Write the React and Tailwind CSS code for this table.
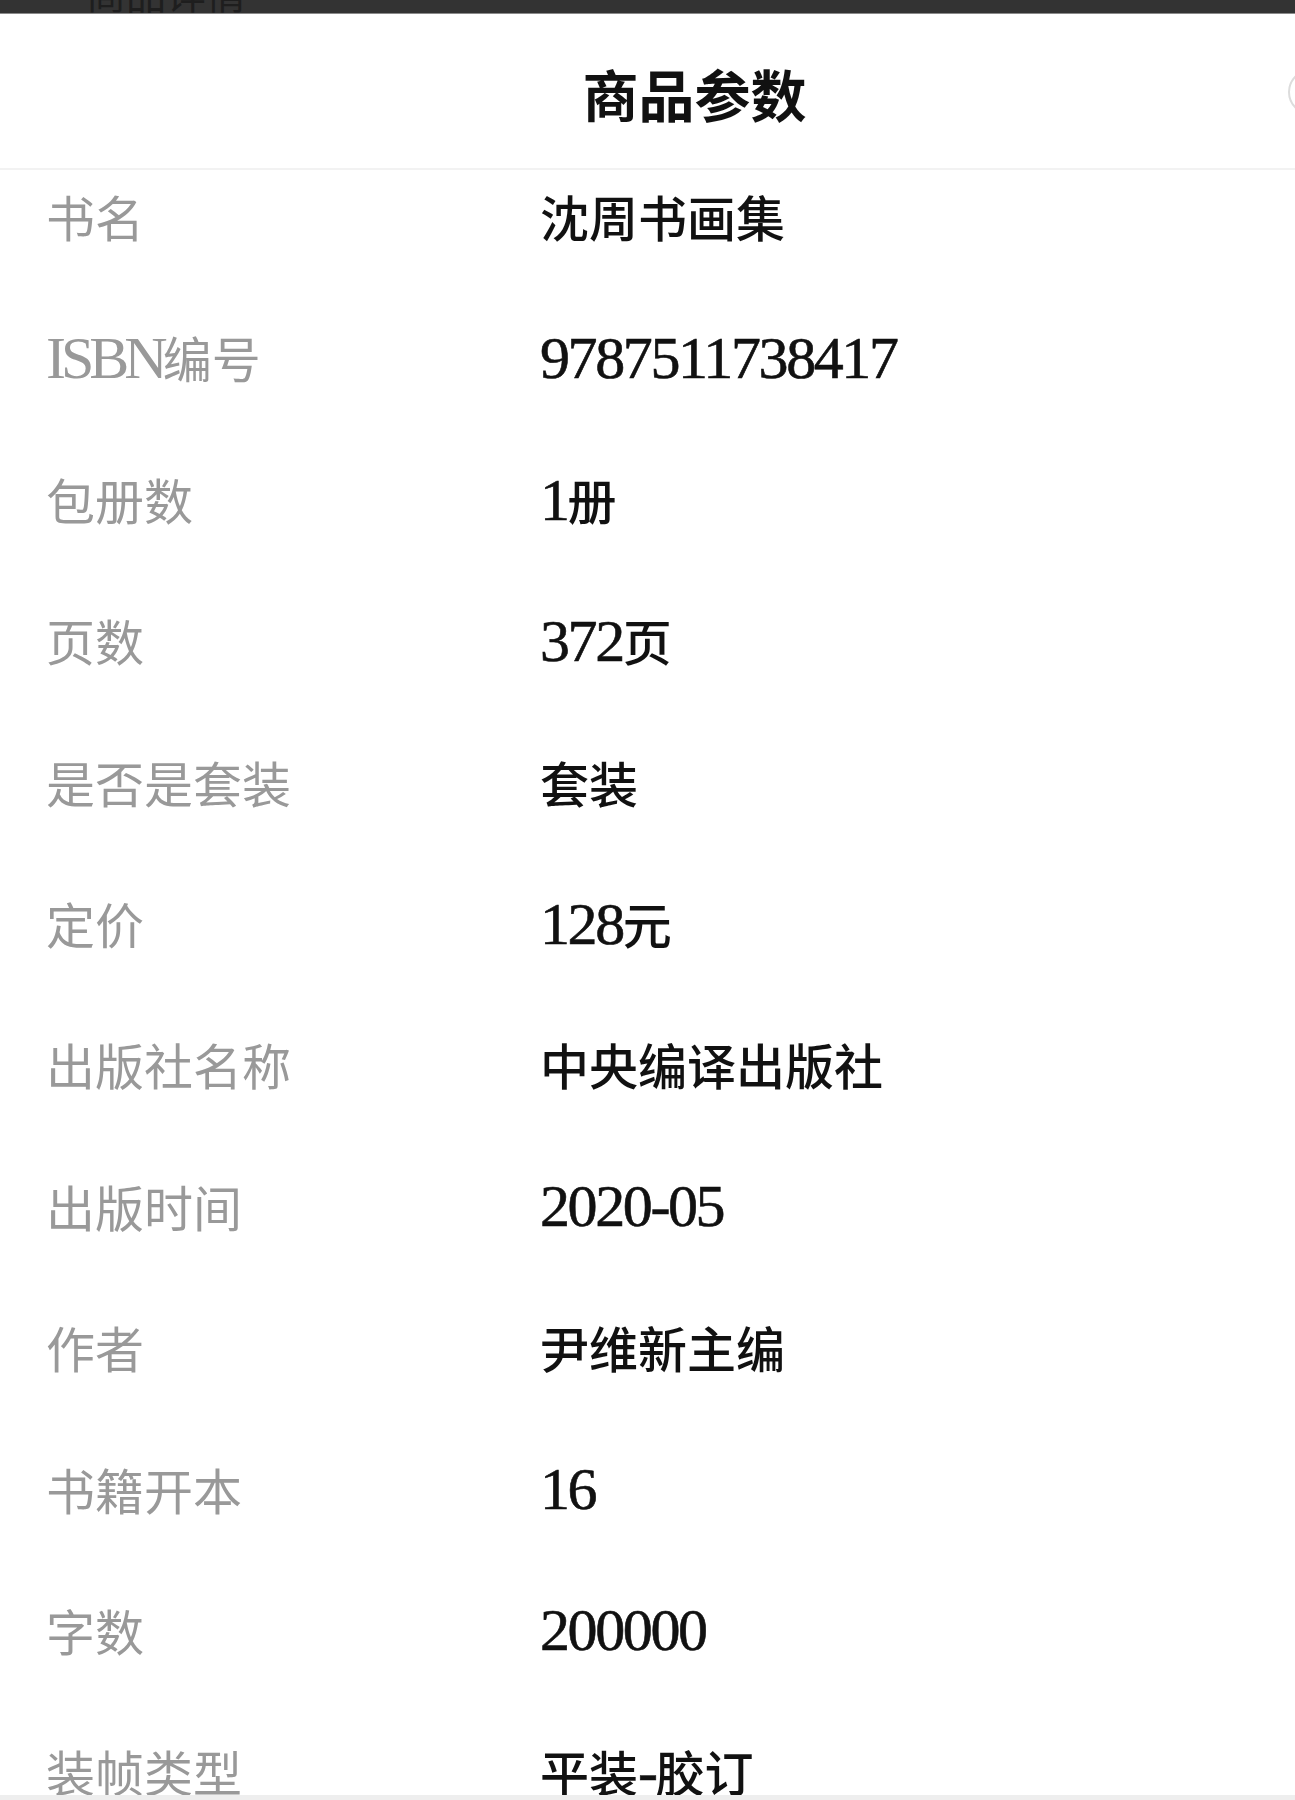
import React from "react";

const rows = [
  ["书名", "沈周书画集"],
  ["ISBN编号", "9787511738417"],
  ["包册数", "1册"],
  ["页数", "372页"],
  ["是否是套装", "套装"],
  ["定价", "128元"],
  ["出版社名称", "中央编译出版社"],
  ["出版时间", "2020-05"],
  ["作者", "尹维新主编"],
  ["书籍开本", "16"],
  ["字数", "200000"],
  ["装帧类型", "平装-胶订"],
];

function Runs({ text, label }) {
  const parts = text.match(/[\x00-\x7f]+|[^\x00-\x7f]+/g) || [];
  return parts.map((p, i) =>
    /^[\x00-\x7f]+$/.test(p) ? (
      <span
        key={i}
        className={
          label
            ? "font-['Liberation_Serif',serif] text-[60px] tracking-[-5px]"
            : "font-['Liberation_Serif',serif] text-[60px] tracking-[-2.4px] [-webkit-text-stroke:0.6px_#111111]"
        }
      >
        {p}
      </span>
    ) : (
      <span
        key={i}
        className={
          label
            ? "font-['Noto_Sans_CJK_SC',sans-serif] text-[49px]"
            : "font-['Noto_Sans_CJK_SC',sans-serif] text-[49px] font-medium"
        }
      >
        {p}
      </span>
    )
  );
}

export default function App() {
  return (
    <div className="relative w-[1295px] h-[1800px] overflow-hidden bg-white font-['Noto_Sans_CJK_SC',sans-serif]">
      <div className="h-[14px] bg-[#333333] border-b border-[#8a8a8a] overflow-hidden">
        <div className="pl-[86px] -mt-[30px] text-[40px] leading-[44px] text-[#1e1e1e]">商品详情</div>
      </div>
      <div className="h-[156px] flex items-center justify-center pl-[94px] pt-[4px] border-b-2 border-[#f2f2f2]">
        <span className="text-[56px] font-bold text-[#111] leading-none">商品参数</span>
      </div>
      <div className="absolute left-[1288px] top-[69px] w-[46px] h-[46px] rounded-full border-2 border-[#dcdcdc]" />
      <div className="flex flex-col pt-[23px] gap-[81.4px]">
        {rows.map(([k, v]) => (
          <div key={k} className="flex items-center h-[60px] leading-[60px]">
            <div className="w-[540px] pl-[46px] text-[#999999] whitespace-nowrap">
              <Runs text={k} label />
            </div>
            <div className="text-[#111111] whitespace-nowrap">
              <Runs text={v} />
            </div>
          </div>
        ))}
      </div>
      <div className="absolute left-0 right-0 bottom-0 h-[5px] bg-[#eeeeee]" />
    </div>
  );
}
